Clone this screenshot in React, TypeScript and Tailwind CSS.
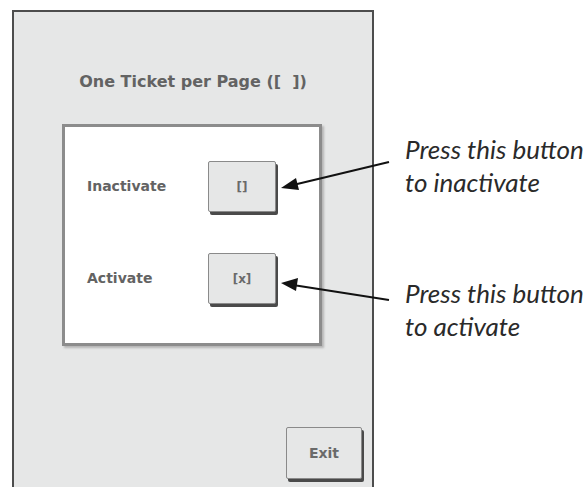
import React from "react";

const ui = { fontFamily: '"DejaVu Sans", Verdana, sans-serif' };
const note = { fontFamily: 'Lato, "Open Sans", sans-serif' };

function Btn({ label, w, h, t }: { label: string; w: string; h: string; t: string }) {
  return (
    <div
      className={`${w} ${h} ${t} flex items-center justify-center bg-[#e6e7e7] border border-[#8a8a8a] rounded-[2px] shadow-[2px_3px_0_#4a4a4a] font-bold text-[#6a6a6a]`}
      style={ui}
    >
      {label}
    </div>
  );
}

export default function App() {
  return (
    <div className="relative w-[586px] h-[487px] bg-white overflow-hidden">
      <div className="flex h-full">
        <div className="ml-[12px] mt-[10px] w-[362px] h-full shrink-0 border-l-2 border-t-2 border-r-2 border-[#4d4d4d] bg-[#e6e7e7] flex flex-col">
          <div className="mt-[60px] text-center text-[16px] font-bold text-[#636363] leading-[20px]" style={ui}>
            One Ticket per Page ([ &nbsp;])
          </div>
          <div className="ml-[48px] mt-[32px] w-[260px] h-[222px] bg-white border-[3px] border-[#8c8c8c] shadow-[2px_2px_2px_#b5b5b5] flex flex-col pl-[22px] pt-[34px] gap-[41px]">
            <div className="flex items-center">
              <div className="w-[121px] text-[14px] font-bold text-[#636363]" style={ui}>
                Inactivate
              </div>
              <Btn label="[]" w="w-[68px]" h="h-[51px]" t="text-[12px]" />
            </div>
            <div className="flex items-center">
              <div className="w-[121px] text-[14px] font-bold text-[#636363]" style={ui}>
                Activate
              </div>
              <Btn label="[x]" w="w-[68px]" h="h-[51px]" t="text-[12px]" />
            </div>
          </div>
          <div className="flex justify-end mt-[81px] mr-[10px]">
            <Btn label="Exit" w="w-[76px]" h="h-[52px]" t="text-[14px]" />
          </div>
        </div>
        <div className="ml-[31px] flex flex-col text-[26px] italic text-[#2a2a2a] leading-[33px]" style={note}>
          <div className="mt-[133px] whitespace-nowrap">
            Press this button
            <br />
            to inactivate
          </div>
          <div className="mt-[78px] whitespace-nowrap">
            Press this button
            <br />
            to activate
          </div>
        </div>
      </div>
      <svg className="absolute left-0 top-0" width="586" height="487">
        <line x1="389" y1="162" x2="293" y2="185" stroke="#111" strokeWidth="2" />
        <polygon points="281,188 296,178 299,190" fill="#111" />
        <line x1="389" y1="300" x2="293" y2="285" stroke="#111" strokeWidth="2" />
        <polygon points="281,283 298,278 296,291" fill="#111" />
      </svg>
    </div>
  );
}
